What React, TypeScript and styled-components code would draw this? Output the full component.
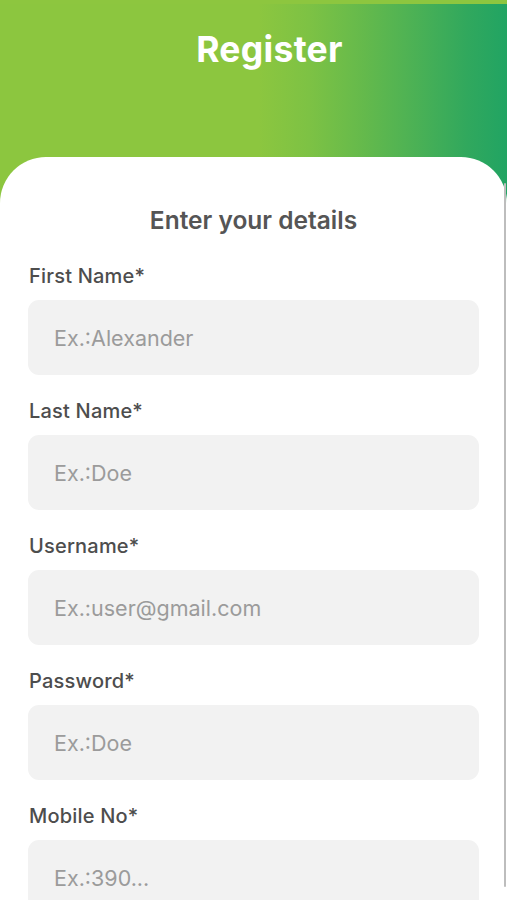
import React from "react";
import styled, { createGlobalStyle } from "styled-components";

const GlobalStyle = createGlobalStyle`
  html, body {
    margin: 0;
    padding: 0;
    height: 100%;
    overflow: hidden;
    background: #ffffff;
  }
  body {
    font-family: Inter, "Noto Sans", "Liberation Sans", sans-serif;
  }
  * { box-sizing: border-box; }
`;

const Screen = styled.div`
  position: relative;
  width: 100%;
  height: 900px;
  overflow: hidden;
  display: flex;
  flex-direction: column;
  background: linear-gradient(
    90deg,
    #8cc63f 0%,
    #8cc63f 51%,
    #7dc244 61%,
    #66ba4b 71%,
    #4bb155 82%,
    #31a85d 92%,
    #21a463 100%
  );
`;

const Strip = styled.div`
  height: 4px;
  background: #8dc63f;
  flex-shrink: 0;
`;

const Header = styled.header`
  height: 153px;
  flex-shrink: 0;
  display: flex;
  justify-content: center;
  align-items: flex-start;
  padding: 25px 0 0 32px;
`;

const Title = styled.h1`
  margin: 0;
  color: #ffffff;
  font-size: 35.5px;
  line-height: 42px;
  font-weight: 700;
  letter-spacing: 0.3px;
`;

const Card = styled.main`
  flex: 1;
  background: #ffffff;
  border-radius: 46px 46px 0 0;
  padding: 47px 28px 0 28px;
  display: flex;
  flex-direction: column;
`;

const Heading = styled.h2`
  margin: 0 0 28px 0;
  text-align: center;
  color: #555555;
  font-size: 24.5px;
  line-height: 32px;
  font-weight: 600;
`;

const Fields = styled.div`
  display: flex;
  flex-direction: column;
  gap: 24px;
`;

const Field = styled.label`
  display: flex;
  flex-direction: column;
  gap: 11px;
`;

const LabelText = styled.span`
  color: #4d4d4d;
  font-size: 20px;
  line-height: 25px;
  font-weight: 500;
  letter-spacing: 0.2px;
  padding-left: 1px;
`;

const Input = styled.input`
  width: 100%;
  height: 75px;
  border: none;
  outline: none;
  border-radius: 11px;
  background: #f2f2f2;
  padding: 0 26px;
  font-family: inherit;
  font-size: 21.5px;
  color: #333333;
  &::placeholder {
    color: #9b9b9b;
    opacity: 1;
  }
`;

const ScrollBar = styled.div`
  position: absolute;
  right: 1px;
  top: 183px;
  width: 2px;
  height: 704px;
  background: #bdbdbd;
  border-radius: 1px;
`;

const fields = [
  { label: "First Name*", placeholder: "Ex.:Alexander", type: "text" },
  { label: "Last Name*", placeholder: "Ex.:Doe", type: "text" },
  { label: "Username*", placeholder: "Ex.:user@gmail.com", type: "text" },
  { label: "Password*", placeholder: "Ex.:Doe", type: "text" },
  { label: "Mobile No*", placeholder: "Ex.:390...", type: "tel" },
];

export default function App() {
  return (
    <>
      <GlobalStyle />
      <Screen>
        <Strip />
        <Header>
          <Title>Register</Title>
        </Header>
        <Card>
          <Heading>Enter your details</Heading>
          <Fields>
            {fields.map((f) => (
              <Field key={f.label}>
                <LabelText>{f.label}</LabelText>
                <Input type={f.type} placeholder={f.placeholder} />
              </Field>
            ))}
          </Fields>
        </Card>
        <ScrollBar />
      </Screen>
    </>
  );
}
